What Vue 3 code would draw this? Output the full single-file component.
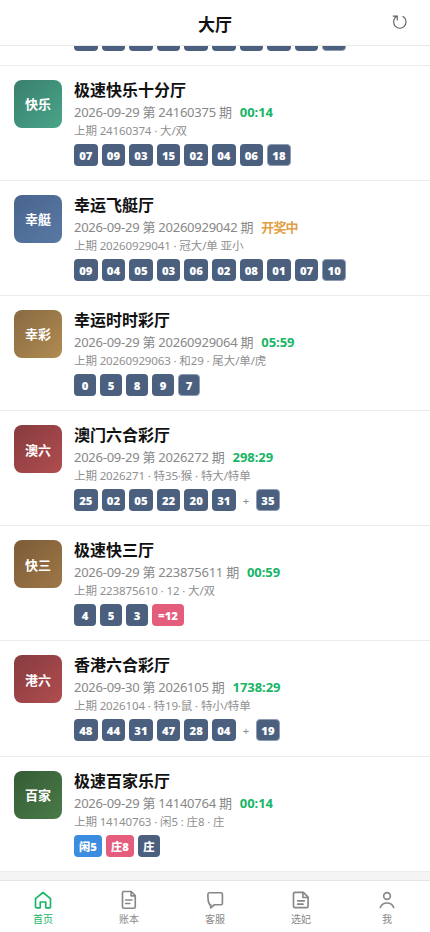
<script setup>
const rows = [
  { id: 1, badge: '快乐', tone: 'teal', name: '极速快乐十分厅', issue: '2026-09-29 第 24160375 期', time: '00:14', last: '上期 24160374 · 大/双', balls: ['07', '09', '03', '15', '02', '04', '06', '18'], ring: true },
  { id: 2, badge: '幸艇', tone: 'blue', name: '幸运飞艇厅', issue: '2026-09-29 第 20260929042 期', time: '开奖中', drawing: true, last: '上期 20260929041 · 冠大/单 亚小', balls: ['09', '04', '05', '03', '06', '02', '08', '01', '07', '10'], ring: true },
  { id: 3, badge: '幸彩', tone: 'gold', name: '幸运时时彩厅', issue: '2026-09-29 第 20260929064 期', time: '05:59', last: '上期 20260929063 · 和29 · 尾大/单/虎', balls: ['0', '5', '8', '9', '7'], ring: true },
  { id: 4, badge: '澳六', tone: 'red', name: '澳门六合彩厅', issue: '2026-09-29 第 2026272 期', time: '298:29', last: '上期 2026271 · 特35·猴 · 特大/特单', balls: ['25', '02', '05', '22', '20', '31', '+', '35'], ring: true },
  { id: 5, badge: '快三', tone: 'brown', name: '极速快三厅', issue: '2026-09-29 第 223875611 期', time: '00:59', last: '上期 223875610 · 12 · 大/双', balls: ['4', '5', '3', '=12'] },
  { id: 6, badge: '港六', tone: 'red', name: '香港六合彩厅', issue: '2026-09-30 第 2026105 期', time: '1738:29', last: '上期 2026104 · 特19·鼠 · 特小/特单', balls: ['48', '44', '31', '47', '28', '04', '+', '19'], ring: true },
  { id: 7, badge: '百家', tone: 'green', name: '极速百家乐厅', issue: '2026-09-29 第 14140764 期', time: '00:14', last: '上期 14140763 · 闲5 : 庄8 · 庄', balls: ['闲5', '庄8', '庄'] },
]

function ballClass(row, ball, i) {
  return {
    plus: ball === '+',
    double: /^\d\d$/.test(ball),
    sum: ball.startsWith('='),
    wide: /^[闲庄]\d/.test(ball),
    pink: ball.startsWith('=') || /^庄\d/.test(ball),
    azure: ball.startsWith('闲'),
    ring: row.ring && i === row.balls.length - 1,
  }
}

const tabs = [
  { label: '首页', paths: ['M3 10.4 12 3l9 7.4V20.200a1.200 1.200 0 0 1-1.200 1.200H15.300v-7h-6.600v7H4.200A1.200 1.200 0 0 1 3 20.200z'] },
  { label: '账本', paths: ['M5.200 1.800h9.500l4.800 4.800V20.200a1.700 1.700 0 0 1-1.700 1.700H5.900A1.700 1.700 0 0 1 4.200 20.200V3.500a1.700 1.700 0 0 1 1-1.700z', 'M14.500 2.200V7h4.700', 'M8 12h7.500M8 16.200h5'] },
  { label: '客服', paths: ['M5 3.300h14.200a1.700 1.700 0 0 1 1.700 1.700v11a1.700 1.700 0 0 1-1.700 1.700h-8L6.800 21.300v-3.600H5.700C4.300 15.500 3.500 12 3.500 9V5A1.700 1.700 0 0 1 5 3.300z'] },
  { label: '选妃', paths: ['M4.500 2.800h10.300l5.700 5.800v10.900a1.700 1.700 0 0 1-1.700 1.700H4.700A1.700 1.700 0 0 1 3 19.500v-15.200A1.500 1.500 0 0 1 4.500 2.800z', 'M14.300 3.100V9h5.900', 'M8 13h8M8 17h6.500'] },
  { label: '我', paths: ['M12 3.200a4 4 0 1 1 0 8 4 4 0 0 1 0-8z', 'M4 20.900c1.300-3.500 4.200-5.300 8-5.300s6.700 1.800 8 5.300'] },
]
</script>

<template>
  <div class="page">
    <header class="header">
      <span></span>
      <h1>大厅</h1>
      <button class="refresh" aria-label="刷新">
        <svg viewBox="0 0 16 16"><path d="M1.700 2h4.200v4.200M5.700 2.200C3.500 3.300 2.500 5.300 2.500 7.600a5.800 5.800 0 0 0 11.600 0c0-2.300-1.100-4.300-3.200-5.400" /></svg>
      </button>
    </header>
    <main class="list">
      <div class="scrolled">
        <div class="balls">
          <span v-for="n in 10" :key="n" class="ball double" :class="{ ring: n === 10 }"></span>
        </div>
      </div>
      <article v-for="row in rows" :key="row.id" class="row">
        <div class="badge" :class="row.tone">{{ row.badge }}</div>
        <div class="info">
          <h2>{{ row.name }}</h2>
          <div class="issue"><span>{{ row.issue }}</span><b :class="{ drawing: row.drawing }">{{ row.time }}</b></div>
          <div class="last">{{ row.last }}</div>
          <div class="balls">
            <span v-for="(ball, i) in row.balls" :key="i" class="ball" :class="ballClass(row, ball, i)">{{ ball }}</span>
          </div>
        </div>
      </article>
    </main>
    <nav class="tabs">
      <a v-for="(tab, i) in tabs" :key="tab.label" :class="{ active: i === 0 }">
        <svg viewBox="0 0 24 24"><path v-for="p in tab.paths" :key="p" :d="p" /></svg>
        <span>{{ tab.label }}</span>
      </a>
    </nav>
  </div>
</template>

<style>
body { margin: 0; }
</style>

<style scoped>
.page { width: 430px; height: 932px; display: flex; flex-direction: column; overflow: hidden; background: #f4f4f4; font-family: "Noto Sans", "Noto Sans CJK SC", sans-serif; color: #111; }
.header { box-sizing: border-box; height: 46px; flex: none; display: grid; grid-template-columns: 44px 1fr 44px; align-items: center; background: #fff; border-bottom: 1px solid #e9e9e9; padding: 4px 8px 0; }
h1 { margin: 0; text-align: center; font-size: 17px; line-height: 24px; font-weight: 700; }
.refresh { border: 0; background: none; padding: 0; height: 24px; display: flex; justify-content: center; align-items: center; }
.refresh svg { width: 17px; height: 17px; margin: -4px 1px 0 0; fill: none; stroke: #666; stroke-width: 1.1; }
.list { flex: 1; min-height: 0; overflow: hidden; }
.scrolled { box-sizing: border-box; height: 19.57px; display: flex; align-items: flex-end; padding: 0 14px 14px 74px; background: #fff; border-bottom: 1px solid #ebebeb; }
.row { box-sizing: border-box; height: 115.17px; display: flex; gap: 12px; padding: 14px; background: #fff; border-bottom: 1px solid #ebebeb; }
.badge { width: 48px; height: 48px; flex: none; border-radius: 8px; display: flex; align-items: center; justify-content: center; color: #fff; font-size: 13px; font-weight: 700; }
.teal { background: linear-gradient(135deg, #3a7f6d, #48a589); }
.blue { background: linear-gradient(135deg, #48658e, #5878a3); }
.gold { background: linear-gradient(135deg, #886a42, #b08b51); }
.red { background: linear-gradient(135deg, #873b3e, #b04d50); }
.brown { background: linear-gradient(135deg, #7c5c37, #9e7747); }
.green { background: linear-gradient(135deg, #355c35, #4a7b49); }
.info { min-width: 0; white-space: nowrap; }
h2 { margin: 0; font-size: 16px; line-height: 21px; font-weight: 700; }
.issue { display: flex; gap: 8px; margin-top: 2px; font-size: 13px; line-height: 19px; letter-spacing: -0.25px; color: #888; }
.issue b { color: #18b566; font-weight: 700; letter-spacing: -0.05px; }
.issue .drawing { color: #e0a045; letter-spacing: -0.9px; }
.last { font-size: 11.5px; line-height: 17px; letter-spacing: -0.12px; color: #909090; }
.balls { display: flex; gap: 4px; margin-top: 5px; }
.ball { box-sizing: border-box; width: 22px; height: 22px; flex: none; display: flex; align-items: center; justify-content: center; border-radius: 4px; background: #4b607f; color: #fff; font-size: 11.3px; line-height: 21px; font-weight: 900; padding-top: 1px; }
.double { width: 23.6px; }
.sum { width: 32px; }
.wide { width: 28px; }
.pink { background: #e45d7c; }
.azure { background: #3c8ce0; }
.ring { border: 1px solid #8f9db5; line-height: 19px; }
.plus { width: 12.6px; background: none; color: #888; font-weight: 400; }
.tabs { box-sizing: border-box; height: 52px; flex: none; display: grid; grid-template-columns: repeat(5, 1fr); border-top: 1px solid #e6e6e6; background: #fff; }
.tabs a { display: flex; flex-direction: column; align-items: center; padding-top: 9px; color: #888; font-size: 10px; line-height: 19px; }
.tabs svg { width: 20px; height: 20px; fill: none; stroke: currentColor; stroke-width: 2; stroke-linejoin: round; stroke-linecap: round; }
.tabs .active { color: #18b566; }
</style>
